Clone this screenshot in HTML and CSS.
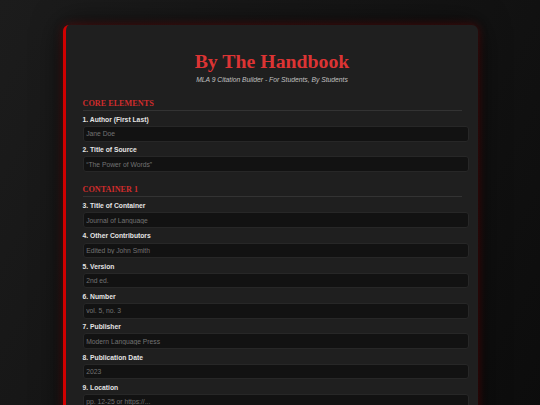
FILE: index.html
```html
<!DOCTYPE html>
<html lang="en">
<head>
<meta charset="utf-8">
<title>By The Handbook</title>
<link rel="stylesheet" href="styles.css">
</head>
<body>
<main class="card">
  <header class="head">
    <h1 class="title">By The Handbook</h1>
    <p class="subtitle">MLA 9 Citation Builder - For Students, By Students</p>
  </header>

  <section class="section">
    <h2 class="section-title">Core Elements</h2>
    <div class="field">
      <label class="label">1. Author (First Last)</label>
      <input class="input" type="text" placeholder="Jane Doe">
    </div>
    <div class="field">
      <label class="label">2. Title of Source</label>
      <input class="input" type="text" placeholder="“The Power of Words”">
    </div>
  </section>

  <section class="section">
    <h2 class="section-title">Container 1</h2>
    <div class="field">
      <label class="label">3. Title of Container</label>
      <input class="input" type="text" placeholder="Journal of Language">
    </div>
    <div class="field">
      <label class="label">4. Other Contributors</label>
      <input class="input" type="text" placeholder="Edited by John Smith">
    </div>
    <div class="field">
      <label class="label">5. Version</label>
      <input class="input" type="text" placeholder="2nd ed.">
    </div>
    <div class="field">
      <label class="label">6. Number</label>
      <input class="input" type="text" placeholder="vol. 5, no. 3">
    </div>
    <div class="field">
      <label class="label">7. Publisher</label>
      <input class="input" type="text" placeholder="Modern Language Press">
    </div>
    <div class="field">
      <label class="label">8. Publication Date</label>
      <input class="input" type="text" placeholder="2023">
    </div>
    <div class="field">
      <label class="label">9. Location</label>
      <input class="input" type="text" placeholder="pp. 12-25 or https://...">
    </div>
  </section>
</main>
</body>
</html>
```

FILE: styles.css
```css
html, body {
  margin: 0;
  padding: 0;
}

body {
  min-height: 100vh;
  background: linear-gradient(120deg, #1c1c1c 0%, #141414 50%, #0c0c0c 100%);
  font-family: "Liberation Sans", Arial, sans-serif;
  color: #e0e0e0;
  padding-top: 25px;
  box-sizing: border-box;
  overflow: hidden;
}

.card {
  width: 379px;
  margin: 0 auto;
  padding: 17px 16px 17px 17px;
  background: #1f1f1f;
  border-left: 3px solid #d10000;
  border-radius: 6px;
  box-shadow: 0 0 10px rgba(190, 0, 0, 0.35), 0 0 30px rgba(0, 0, 0, 0.7);
}

.head {
  display: flow-root;
  text-align: center;
}

.title {
  margin: 7.7px 0 4.5px;
  font-family: Georgia, "Liberation Serif", serif;
  font-size: 19.8px;
  font-weight: bold;
  line-height: 22px;
  color: #dc3434;
}

.subtitle {
  margin: 0 0 6.4px;
  font-size: 6.75px;
  line-height: 7.6px;
  font-style: italic;
  color: #c0c0c0;
}

.section {
  display: flow-root;
}

.section-title {
  margin: 8.5px 0 5.1px;
  padding-bottom: 2px;
  border-bottom: 1px solid #333;
  font-family: Georgia, "Liberation Serif", serif;
  font-size: 8.2px;
  line-height: 9.1px;
  font-weight: bold;
  text-transform: uppercase;
  color: #d02c2c;
}

.field {
  margin-bottom: 4.5px;
}

.label {
  display: block;
  margin-bottom: 2.6px;
  font-size: 6.75px;
  line-height: 7.6px;
  font-weight: bold;
  color: #e4e4e4;
}

.input {
  display: block;
  width: 100%;
  height: 7.6px;
  margin: 0;
  padding: 3px 2.7px;
  font-family: "Liberation Sans", Arial, sans-serif;
  font-size: 6.75px;
  line-height: 7.6px;
  color: #ddd;
  background: #121212;
  border: 1px solid #272727;
  border-radius: 3px;
  outline: none;
}

.input::placeholder {
  color: #727272;
}
```
